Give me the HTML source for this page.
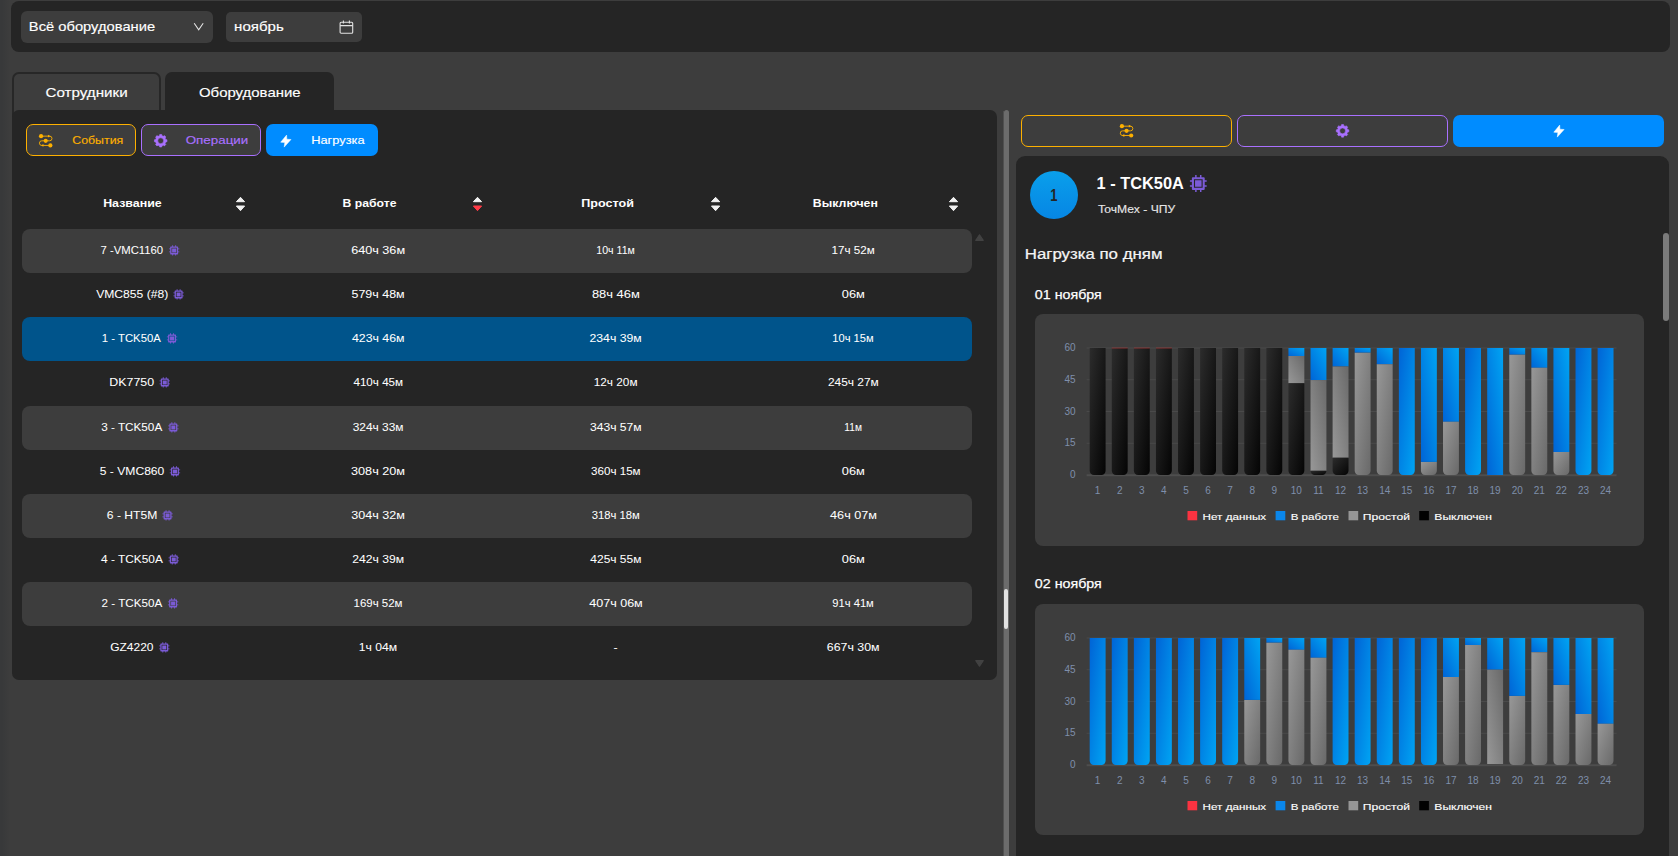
<!DOCTYPE html>
<html lang="ru"><head><meta charset="utf-8"><title>Нагрузка оборудования</title>
<style>
*{box-sizing:border-box;margin:0;padding:0}
html,body{width:1678px;height:856px;overflow:hidden;background:#3d3d3d;font-family:"Liberation Sans", sans-serif;color:#fff}
body{position:relative}
.ab{position:absolute}
.ic{position:absolute;display:block;overflow:visible}
.t{position:absolute;white-space:nowrap;line-height:1;transform-origin:0 50%;display:block}
.pan{position:absolute;background:#252525}
.btn{position:absolute;border-radius:7px;height:32px}
.row{position:absolute;left:22px;width:950px;border-radius:8px;background:#3d3d3d}
</style></head><body>
<div class="ab" style="left:0;top:0;width:10px;height:856px;background:linear-gradient(90deg,#38393a 20%,#3d3d3d)"></div>

<div class="pan" style="left:11px;top:1px;width:1659px;height:51px;border-radius:8px"></div>
<div class="ab" style="left:21px;top:11px;width:192px;height:32px;border-radius:6px;background:#3d3d3d"></div>
<span class="t" id="t0" style="left:28px;top:20px;font-size:13.5px;font-weight:400;color:#fff;-webkit-text-stroke:0.15px #fff;transform:translateX(0.83px) scaleX(1.0903)">Всё оборудование</span>
<svg class="ic" style="left:193px;top:22px" width="12" height="9" viewBox="0 0 12 9"><path d="M1.2 1.3L5.7 7.7L10.2 1.3" fill="none" stroke="#e4e4e4" stroke-width="1.1"/></svg>
<div class="ab" style="left:226px;top:12px;width:136px;height:30px;border-radius:5px;background:#3d3d3d"></div>
<span class="t" id="t1" style="left:234px;top:20px;font-size:13.5px;font-weight:400;color:#fff;-webkit-text-stroke:0.15px #fff;transform:translateX(0.11px) scaleX(1.1135)">ноябрь</span>
<svg class="ic" style="left:339px;top:20px" width="15" height="14" viewBox="0 0 15 14"><rect x="1.1" y="2.3" width="12.6" height="10.9" rx="1" fill="none" stroke="#e2e2e2" stroke-width="1.1"/><path d="M1.1 5.6H13.7M4.4 0.6V3.4M10.4 0.6V3.4" stroke="#e2e2e2" stroke-width="1.1" fill="none"/></svg>
<div class="ab" style="left:12px;top:72px;width:149px;height:46px;border-radius:7px 7px 0 0;border:2px solid #272727;background:#3d3d3d"></div>
<div class="pan" style="left:165px;top:72px;width:169px;height:46px;border-radius:7px 7px 0 0"></div>
<span class="t" id="t2" style="left:45px;top:86px;font-size:13.5px;font-weight:400;color:#fff;-webkit-text-stroke:0.15px #fff;transform:translateX(0.43px) scaleX(1.1252)">Сотрудники</span>
<span class="t" id="t3" style="left:198px;top:86px;font-size:13.5px;font-weight:400;color:#fff;-webkit-text-stroke:0.15px #fff;transform:translateX(0.94px) scaleX(1.1073)">Оборудование</span>
<div class="pan" style="left:12px;top:110px;width:985px;height:569.6px;border-radius:7px"></div>
<div class="btn" style="left:26px;top:124px;width:110.4px;border:1px solid #fdb000;background:#3d3d3d"></div>
<svg class="ic" style="left:38px;top:133px" width="16" height="16"><g transform="translate(0.45 0.55)"><path d="M2.6 2.6H11.2a2.325 2.325 0 0 1 0 4.65H3.3a2.325 2.325 0 0 0 0 4.65H11.9" fill="none" stroke="#fdb000" stroke-width="1" opacity="0.9"/><circle cx="2.6" cy="2.6" r="2.1" fill="#fdb000"/><circle cx="7.25" cy="7.25" r="2.1" fill="#fdb000"/><circle cx="11.9" cy="11.9" r="2.1" fill="#fdb000"/><path d="M9.5 1.2L11.9 2.6L9.5 4Z" fill="#fdb000"/><path d="M5 10.5L2.6 11.9L5 13.3Z" fill="#fdb000"/></g></svg>
<span class="t" id="t4" style="left:72px;top:135px;font-size:11.5px;font-weight:400;color:#fdb000;-webkit-text-stroke:0.15px #fdb000;transform:translateX(0.25px) scaleX(1.0737)">События</span>
<div class="btn" style="left:141px;top:124px;width:119.6px;border:1px solid #a970ff;background:#3d3d3d"></div>
<svg class="ic" style="left:153px;top:133px" width="15" height="15"><g transform="translate(0.70 0.75)"><path d="M5.76 2.00 L6.01 0.73 L7.99 0.73 L8.24 2.00 L9.66 2.59 L10.73 1.86 L12.14 3.27 L11.41 4.34 L12.00 5.76 L13.27 6.01 L13.27 7.99 L12.00 8.24 L11.41 9.66 L12.14 10.73 L10.73 12.14 L9.66 11.41 L8.24 12.00 L7.99 13.27 L6.01 13.27 L5.76 12.00 L4.34 11.41 L3.27 12.14 L1.86 10.73 L2.59 9.66 L2.00 8.24 L0.73 7.99 L0.73 6.01 L2.00 5.76 L2.59 4.34 L1.86 3.27 L3.27 1.86 L4.34 2.59Z M4.05 7.00 a2.95 2.95 0 1 0 5.90 0 a2.95 2.95 0 1 0 -5.90 0Z" fill="#a970ff" fill-rule="evenodd" stroke="#a970ff" stroke-width="0.6" stroke-linejoin="round"/></g></svg>
<span class="t" id="t5" style="left:185px;top:135px;font-size:11.5px;font-weight:400;color:#a970ff;-webkit-text-stroke:0.15px #a970ff;transform:translateX(0.71px) scaleX(1.1635)">Операции</span>
<div class="btn" style="left:266px;top:124px;width:111.6px;background:#008cff"></div>
<svg class="ic" style="left:280px;top:134px" width="12" height="14"><g transform="translate(0.40 0.70)"><path d="M6.2 0.4L0.3 7.5L4.4 7.7L3.8 12.4L10.6 4.8L6.4 4.5Z" fill="#fff" stroke="#fff" stroke-width="0.5" stroke-linejoin="round"/></g></svg>
<span class="t" id="t6" style="left:311px;top:135px;font-size:11.5px;font-weight:400;color:#fff;-webkit-text-stroke:0.15px #fff;transform:translateX(0.18px) scaleX(1.1148)">Нагрузка</span>
<span class="t" id="t7" style="left:103px;top:198px;font-size:11px;font-weight:700;color:#fff;transform:translateX(0.14px) scaleX(1.1281)">Название</span>
<svg class="ic" style="left:235px;top:196px" width="11" height="17"><g transform="translate(0.50 0.00)"><path d="M5 1.3L9.1 5.7H0.9Z" fill="#f0f0f0" stroke="#f0f0f0" stroke-width="1" stroke-linejoin="round"/><path d="M5 14.7L9.1 10H0.9Z" fill="#f0f0f0" stroke="#f0f0f0" stroke-width="1" stroke-linejoin="round"/></g></svg>
<span class="t" id="t8" style="left:342px;top:198px;font-size:11px;font-weight:700;color:#fff;transform:translateX(0.53px) scaleX(1.1111)">В работе</span>
<svg class="ic" style="left:472px;top:196px" width="11" height="17"><g transform="translate(0.50 0.00)"><path d="M5 1.3L9.1 5.7H0.9Z" fill="#f0f0f0" stroke="#f0f0f0" stroke-width="1" stroke-linejoin="round"/><path d="M5 14.7L9.1 10H0.9Z" fill="#ff3b47" stroke="#ff3b47" stroke-width="1" stroke-linejoin="round"/></g></svg>
<span class="t" id="t9" style="left:581px;top:198px;font-size:11px;font-weight:700;color:#fff;transform:translateX(0.31px) scaleX(1.1412)">Простой</span>
<svg class="ic" style="left:710px;top:196px" width="11" height="17"><g transform="translate(0.60 0.00)"><path d="M5 1.3L9.1 5.7H0.9Z" fill="#f0f0f0" stroke="#f0f0f0" stroke-width="1" stroke-linejoin="round"/><path d="M5 14.7L9.1 10H0.9Z" fill="#f0f0f0" stroke="#f0f0f0" stroke-width="1" stroke-linejoin="round"/></g></svg>
<span class="t" id="t10" style="left:812px;top:198px;font-size:11px;font-weight:700;color:#fff;transform:translateX(0.85px) scaleX(1.1196)">Выключен</span>
<svg class="ic" style="left:948px;top:196px" width="11" height="17"><g transform="translate(0.50 0.00)"><path d="M5 1.3L9.1 5.7H0.9Z" fill="#f0f0f0" stroke="#f0f0f0" stroke-width="1" stroke-linejoin="round"/><path d="M5 14.7L9.1 10H0.9Z" fill="#f0f0f0" stroke="#f0f0f0" stroke-width="1" stroke-linejoin="round"/></g></svg>
<div class="row" style="top:228.80px;height:43.90px"></div>
<div class="row" style="top:316.90px;height:44.10px;background:#00548b"></div>
<div class="row" style="top:405.70px;height:44.10px"></div>
<div class="row" style="top:493.90px;height:43.90px"></div>
<div class="row" style="top:581.90px;height:44.00px"></div>
<span class="t" id="t11" style="left:100px;top:245px;font-size:11.5px;font-weight:400;color:#fff;-webkit-text-stroke:0.04px #fff;transform:translateX(0.47px) scaleX(0.9835)">7 -VMC1160</span>
<svg class="ic" style="left:168px;top:245px" width="12" height="12"><g transform="translate(0.95 0.20)"><path transform="scale(0.6118)" d="M5.3 0h1.5v2.2h3.4V0h1.5v2.2H14a1 1 0 0 1 1 1V5.3h2v1.5h-2v3.4h2v1.5h-2V14a1 1 0 0 1-1 1h-2.3v2h-1.5v-2H6.8v2H5.3v-2H3a1 1 0 0 1-1-1v-2.3H0v-1.5h2V6.8H0V5.3h2V3.2a1 1 0 0 1 1-1h2.3ZM4.1 4.1v8.8h8.8V4.1ZM5.2 5.2h6.6v6.6H5.2Z" fill="#7b5bd6" fill-rule="evenodd"/></g></svg>
<span class="t" id="t12" style="left:351px;top:245px;font-size:11.5px;font-weight:400;color:#fff;-webkit-text-stroke:0.04px #fff;transform:translateX(0.21px) scaleX(1.0972)">640ч 36м</span>
<span class="t" id="t13" style="left:596px;top:245px;font-size:11.5px;font-weight:400;color:#fff;-webkit-text-stroke:0.04px #fff;transform:translateX(0.33px) scaleX(0.9209)">10ч 11м</span>
<span class="t" id="t14" style="left:831px;top:245px;font-size:11.5px;font-weight:400;color:#fff;-webkit-text-stroke:0.04px #fff;transform:translateX(0.43px) scaleX(1.0130)">17ч 52м</span>
<span class="t" id="t15" style="left:96px;top:289px;font-size:11.5px;font-weight:400;color:#fff;-webkit-text-stroke:0.04px #fff;transform:translateX(0.18px) scaleX(1.0542)">VMC855 (#8)</span>
<svg class="ic" style="left:173px;top:289px" width="12" height="12"><g transform="translate(0.40 0.20)"><path transform="scale(0.6118)" d="M5.3 0h1.5v2.2h3.4V0h1.5v2.2H14a1 1 0 0 1 1 1V5.3h2v1.5h-2v3.4h2v1.5h-2V14a1 1 0 0 1-1 1h-2.3v2h-1.5v-2H6.8v2H5.3v-2H3a1 1 0 0 1-1-1v-2.3H0v-1.5h2V6.8H0V5.3h2V3.2a1 1 0 0 1 1-1h2.3ZM4.1 4.1v8.8h8.8V4.1ZM5.2 5.2h6.6v6.6H5.2Z" fill="#7b5bd6" fill-rule="evenodd"/></g></svg>
<span class="t" id="t16" style="left:351px;top:289px;font-size:11.5px;font-weight:400;color:#fff;-webkit-text-stroke:0.04px #fff;transform:translateX(0.48px) scaleX(1.0834)">579ч 48м</span>
<span class="t" id="t17" style="left:591px;top:289px;font-size:11.5px;font-weight:400;color:#fff;-webkit-text-stroke:0.04px #fff;transform:translateX(0.95px) scaleX(1.1216)">88ч 46м</span>
<span class="t" id="t18" style="left:841px;top:289px;font-size:11.5px;font-weight:400;color:#fff;-webkit-text-stroke:0.04px #fff;transform:translateX(0.77px) scaleX(1.1117)">06м</span>
<span class="t" id="t19" style="left:101px;top:333px;font-size:11.5px;font-weight:400;color:#fff;-webkit-text-stroke:0.04px #fff;transform:translateX(0.84px) scaleX(0.9849)">1 - TCK50A</span>
<svg class="ic" style="left:166px;top:333px" width="12" height="12"><g transform="translate(0.85 0.20)"><path transform="scale(0.6118)" d="M5.3 0h1.5v2.2h3.4V0h1.5v2.2H14a1 1 0 0 1 1 1V5.3h2v1.5h-2v3.4h2v1.5h-2V14a1 1 0 0 1-1 1h-2.3v2h-1.5v-2H6.8v2H5.3v-2H3a1 1 0 0 1-1-1v-2.3H0v-1.5h2V6.8H0V5.3h2V3.2a1 1 0 0 1 1-1h2.3ZM4.1 4.1v8.8h8.8V4.1ZM5.2 5.2h6.6v6.6H5.2Z" fill="#7b5bd6" fill-rule="evenodd"/></g></svg>
<span class="t" id="t20" style="left:351px;top:333px;font-size:11.5px;font-weight:400;color:#fff;-webkit-text-stroke:0.04px #fff;transform:translateX(0.98px) scaleX(1.0699)">423ч 46м</span>
<span class="t" id="t21" style="left:589px;top:333px;font-size:11.5px;font-weight:400;color:#fff;-webkit-text-stroke:0.04px #fff;transform:translateX(0.48px) scaleX(1.0640)">234ч 39м</span>
<span class="t" id="t22" style="left:832px;top:333px;font-size:11.5px;font-weight:400;color:#fff;-webkit-text-stroke:0.04px #fff;transform:translateX(0.34px) scaleX(0.9675)">10ч 15м</span>
<span class="t" id="t23" style="left:109px;top:377px;font-size:11.5px;font-weight:400;color:#fff;-webkit-text-stroke:0.04px #fff;transform:translateX(0.34px) scaleX(1.0776)">DK7750</span>
<svg class="ic" style="left:159px;top:377px" width="12" height="12"><g transform="translate(0.55 0.20)"><path transform="scale(0.6118)" d="M5.3 0h1.5v2.2h3.4V0h1.5v2.2H14a1 1 0 0 1 1 1V5.3h2v1.5h-2v3.4h2v1.5h-2V14a1 1 0 0 1-1 1h-2.3v2h-1.5v-2H6.8v2H5.3v-2H3a1 1 0 0 1-1-1v-2.3H0v-1.5h2V6.8H0V5.3h2V3.2a1 1 0 0 1 1-1h2.3ZM4.1 4.1v8.8h8.8V4.1ZM5.2 5.2h6.6v6.6H5.2Z" fill="#7b5bd6" fill-rule="evenodd"/></g></svg>
<span class="t" id="t24" style="left:353px;top:377px;font-size:11.5px;font-weight:400;color:#fff;-webkit-text-stroke:0.04px #fff;transform:translateX(0.42px) scaleX(1.0122)">410ч 45м</span>
<span class="t" id="t25" style="left:593px;top:377px;font-size:11.5px;font-weight:400;color:#fff;-webkit-text-stroke:0.04px #fff;transform:translateX(0.72px) scaleX(1.0255)">12ч 20м</span>
<span class="t" id="t26" style="left:827px;top:377px;font-size:11.5px;font-weight:400;color:#fff;-webkit-text-stroke:0.04px #fff;transform:translateX(0.92px) scaleX(1.0373)">245ч 27м</span>
<span class="t" id="t27" style="left:101px;top:422px;font-size:11.5px;font-weight:400;color:#fff;-webkit-text-stroke:0.04px #fff;transform:translateX(0.15px) scaleX(1.0197)">3 - TCK50A</span>
<svg class="ic" style="left:168px;top:422px" width="12" height="12"><g transform="translate(0.15 0.20)"><path transform="scale(0.6118)" d="M5.3 0h1.5v2.2h3.4V0h1.5v2.2H14a1 1 0 0 1 1 1V5.3h2v1.5h-2v3.4h2v1.5h-2V14a1 1 0 0 1-1 1h-2.3v2h-1.5v-2H6.8v2H5.3v-2H3a1 1 0 0 1-1-1v-2.3H0v-1.5h2V6.8H0V5.3h2V3.2a1 1 0 0 1 1-1h2.3ZM4.1 4.1v8.8h8.8V4.1ZM5.2 5.2h6.6v6.6H5.2Z" fill="#7b5bd6" fill-rule="evenodd"/></g></svg>
<span class="t" id="t28" style="left:352px;top:422px;font-size:11.5px;font-weight:400;color:#fff;-webkit-text-stroke:0.04px #fff;transform:translateX(0.69px) scaleX(1.0364)">324ч 33м</span>
<span class="t" id="t29" style="left:589px;top:422px;font-size:11.5px;font-weight:400;color:#fff;-webkit-text-stroke:0.04px #fff;transform:translateX(0.93px) scaleX(1.0548)">343ч 57м</span>
<span class="t" id="t30" style="left:844px;top:422px;font-size:11.5px;font-weight:400;color:#fff;-webkit-text-stroke:0.04px #fff;transform:translateX(0.34px) scaleX(0.8843)">11м</span>
<span class="t" id="t31" style="left:99px;top:466px;font-size:11.5px;font-weight:400;color:#fff;-webkit-text-stroke:0.04px #fff;transform:translateX(0.74px) scaleX(1.0528)">5 - VMC860</span>
<svg class="ic" style="left:169px;top:466px" width="12" height="12"><g transform="translate(0.75 0.20)"><path transform="scale(0.6118)" d="M5.3 0h1.5v2.2h3.4V0h1.5v2.2H14a1 1 0 0 1 1 1V5.3h2v1.5h-2v3.4h2v1.5h-2V14a1 1 0 0 1-1 1h-2.3v2h-1.5v-2H6.8v2H5.3v-2H3a1 1 0 0 1-1-1v-2.3H0v-1.5h2V6.8H0V5.3h2V3.2a1 1 0 0 1 1-1h2.3ZM4.1 4.1v8.8h8.8V4.1ZM5.2 5.2h6.6v6.6H5.2Z" fill="#7b5bd6" fill-rule="evenodd"/></g></svg>
<span class="t" id="t32" style="left:351px;top:466px;font-size:11.5px;font-weight:400;color:#fff;-webkit-text-stroke:0.04px #fff;transform:translateX(0.03px) scaleX(1.1003)">308ч 20м</span>
<span class="t" id="t33" style="left:591px;top:466px;font-size:11.5px;font-weight:400;color:#fff;-webkit-text-stroke:0.04px #fff;transform:translateX(0.01px) scaleX(1.0103)">360ч 15м</span>
<span class="t" id="t34" style="left:841px;top:466px;font-size:11.5px;font-weight:400;color:#fff;-webkit-text-stroke:0.04px #fff;transform:translateX(0.77px) scaleX(1.1117)">06м</span>
<span class="t" id="t35" style="left:106px;top:510px;font-size:11.5px;font-weight:400;color:#fff;-webkit-text-stroke:0.04px #fff;transform:translateX(0.81px) scaleX(1.0538)">6 - HT5M</span>
<svg class="ic" style="left:162px;top:510px" width="12" height="12"><g transform="translate(0.35 0.20)"><path transform="scale(0.6118)" d="M5.3 0h1.5v2.2h3.4V0h1.5v2.2H14a1 1 0 0 1 1 1V5.3h2v1.5h-2v3.4h2v1.5h-2V14a1 1 0 0 1-1 1h-2.3v2h-1.5v-2H6.8v2H5.3v-2H3a1 1 0 0 1-1-1v-2.3H0v-1.5h2V6.8H0V5.3h2V3.2a1 1 0 0 1 1-1h2.3ZM4.1 4.1v8.8h8.8V4.1ZM5.2 5.2h6.6v6.6H5.2Z" fill="#7b5bd6" fill-rule="evenodd"/></g></svg>
<span class="t" id="t36" style="left:351px;top:510px;font-size:11.5px;font-weight:400;color:#fff;-webkit-text-stroke:0.04px #fff;transform:translateX(0.31px) scaleX(1.0912)">304ч 32м</span>
<span class="t" id="t37" style="left:591px;top:510px;font-size:11.5px;font-weight:400;color:#fff;-webkit-text-stroke:0.04px #fff;transform:translateX(0.63px) scaleX(0.9808)">318ч 18м</span>
<span class="t" id="t38" style="left:830px;top:510px;font-size:11.5px;font-weight:400;color:#fff;-webkit-text-stroke:0.04px #fff;transform:translateX(0.09px) scaleX(1.0983)">46ч 07м</span>
<span class="t" id="t39" style="left:101px;top:554px;font-size:11.5px;font-weight:400;color:#fff;-webkit-text-stroke:0.04px #fff;transform:translateX(0.12px) scaleX(1.0306)">4 - TCK50A</span>
<svg class="ic" style="left:168px;top:554px" width="12" height="12"><g transform="translate(0.55 0.20)"><path transform="scale(0.6118)" d="M5.3 0h1.5v2.2h3.4V0h1.5v2.2H14a1 1 0 0 1 1 1V5.3h2v1.5h-2v3.4h2v1.5h-2V14a1 1 0 0 1-1 1h-2.3v2h-1.5v-2H6.8v2H5.3v-2H3a1 1 0 0 1-1-1v-2.3H0v-1.5h2V6.8H0V5.3h2V3.2a1 1 0 0 1 1-1h2.3ZM4.1 4.1v8.8h8.8V4.1ZM5.2 5.2h6.6v6.6H5.2Z" fill="#7b5bd6" fill-rule="evenodd"/></g></svg>
<span class="t" id="t40" style="left:352px;top:554px;font-size:11.5px;font-weight:400;color:#fff;-webkit-text-stroke:0.04px #fff;transform:translateX(0.20px) scaleX(1.0552)">242ч 39м</span>
<span class="t" id="t41" style="left:590px;top:554px;font-size:11.5px;font-weight:400;color:#fff;-webkit-text-stroke:0.04px #fff;transform:translateX(0.37px) scaleX(1.0396)">425ч 55м</span>
<span class="t" id="t42" style="left:841px;top:554px;font-size:11.5px;font-weight:400;color:#fff;-webkit-text-stroke:0.04px #fff;transform:translateX(0.77px) scaleX(1.1117)">06м</span>
<span class="t" id="t43" style="left:101px;top:598px;font-size:11.5px;font-weight:400;color:#fff;-webkit-text-stroke:0.04px #fff;transform:translateX(0.57px) scaleX(1.0143)">2 - TCK50A</span>
<svg class="ic" style="left:167px;top:598px" width="12" height="12"><g transform="translate(0.90 0.20)"><path transform="scale(0.6118)" d="M5.3 0h1.5v2.2h3.4V0h1.5v2.2H14a1 1 0 0 1 1 1V5.3h2v1.5h-2v3.4h2v1.5h-2V14a1 1 0 0 1-1 1h-2.3v2h-1.5v-2H6.8v2H5.3v-2H3a1 1 0 0 1-1-1v-2.3H0v-1.5h2V6.8H0V5.3h2V3.2a1 1 0 0 1 1-1h2.3ZM4.1 4.1v8.8h8.8V4.1ZM5.2 5.2h6.6v6.6H5.2Z" fill="#7b5bd6" fill-rule="evenodd"/></g></svg>
<span class="t" id="t44" style="left:353px;top:598px;font-size:11.5px;font-weight:400;color:#fff;-webkit-text-stroke:0.04px #fff;transform:translateX(0.49px) scaleX(0.9992)">169ч 52м</span>
<span class="t" id="t45" style="left:589px;top:598px;font-size:11.5px;font-weight:400;color:#fff;-webkit-text-stroke:0.04px #fff;transform:translateX(0.19px) scaleX(1.0913)">407ч 06м</span>
<span class="t" id="t46" style="left:832px;top:598px;font-size:11.5px;font-weight:400;color:#fff;-webkit-text-stroke:0.04px #fff;transform:translateX(0.34px) scaleX(0.9715)">91ч 41м</span>
<span class="t" id="t47" style="left:110px;top:642px;font-size:11.5px;font-weight:400;color:#fff;-webkit-text-stroke:0.04px #fff;transform:translateX(0.20px) scaleX(1.0425)">GZ4220</span>
<svg class="ic" style="left:159px;top:642px" width="12" height="12"><g transform="translate(0.10 0.20)"><path transform="scale(0.6118)" d="M5.3 0h1.5v2.2h3.4V0h1.5v2.2H14a1 1 0 0 1 1 1V5.3h2v1.5h-2v3.4h2v1.5h-2V14a1 1 0 0 1-1 1h-2.3v2h-1.5v-2H6.8v2H5.3v-2H3a1 1 0 0 1-1-1v-2.3H0v-1.5h2V6.8H0V5.3h2V3.2a1 1 0 0 1 1-1h2.3ZM4.1 4.1v8.8h8.8V4.1ZM5.2 5.2h6.6v6.6H5.2Z" fill="#7b5bd6" fill-rule="evenodd"/></g></svg>
<span class="t" id="t48" style="left:358px;top:642px;font-size:11.5px;font-weight:400;color:#fff;-webkit-text-stroke:0.04px #fff;transform:translateX(0.66px) scaleX(1.0578)">1ч 04м</span>
<span class="t" id="t49" style="left:613px;top:642px;font-size:11.5px;font-weight:400;color:#fff;-webkit-text-stroke:0.04px #fff;transform:translateX(0.49px) scaleX(1.0758)">-</span>
<span class="t" id="t50" style="left:826px;top:642px;font-size:11.5px;font-weight:400;color:#fff;-webkit-text-stroke:0.04px #fff;transform:translateX(0.76px) scaleX(1.0747)">667ч 30м</span>
<svg class="ic" style="left:975px;top:234px" width="9" height="7" viewBox="0 0 9 7"><path d="M4.5 0.8L8.2 6.4H0.8Z" fill="#424242" stroke="#424242" stroke-width="1.2" stroke-linejoin="round"/></svg>
<svg class="ic" style="left:975px;top:660px" width="9" height="7" viewBox="0 0 9 7"><path d="M4.5 6.2L8.2 0.6H0.8Z" fill="#424242" stroke="#424242" stroke-width="1.2" stroke-linejoin="round"/></svg>
<div class="ab" style="left:1003px;top:111px;width:1px;height:745px;background:#505050"></div>
<div class="ab" style="left:1004px;top:109.5px;width:5px;height:746.5px;border-radius:3px 3px 0 0;background:#6c6c6c"></div>
<div class="ab" style="left:1003.7px;top:589.3px;width:4.8px;height:40px;border-radius:3px;background:#e2e2e2"></div>
<div class="btn" style="left:1021px;top:115px;width:210.6px;border:1px solid #fdb000;background:#3d3d3d"></div>
<svg class="ic" style="left:1119px;top:123px" width="16" height="16"><g transform="translate(0.30 0.60)"><path d="M2.6 2.6H11.2a2.325 2.325 0 0 1 0 4.65H3.3a2.325 2.325 0 0 0 0 4.65H11.9" fill="none" stroke="#fdb000" stroke-width="1" opacity="0.9"/><circle cx="2.6" cy="2.6" r="2.1" fill="#fdb000"/><circle cx="7.25" cy="7.25" r="2.1" fill="#fdb000"/><circle cx="11.9" cy="11.9" r="2.1" fill="#fdb000"/><path d="M9.5 1.2L11.9 2.6L9.5 4Z" fill="#fdb000"/><path d="M5 10.5L2.6 11.9L5 13.3Z" fill="#fdb000"/></g></svg>
<div class="btn" style="left:1237px;top:115px;width:210.7px;border:1px solid #a970ff;background:#3d3d3d"></div>
<svg class="ic" style="left:1335px;top:123px" width="15" height="15"><g transform="translate(0.56 0.86)"><path d="M5.76 2.00 L6.01 0.73 L7.99 0.73 L8.24 2.00 L9.66 2.59 L10.73 1.86 L12.14 3.27 L11.41 4.34 L12.00 5.76 L13.27 6.01 L13.27 7.99 L12.00 8.24 L11.41 9.66 L12.14 10.73 L10.73 12.14 L9.66 11.41 L8.24 12.00 L7.99 13.27 L6.01 13.27 L5.76 12.00 L4.34 11.41 L3.27 12.14 L1.86 10.73 L2.59 9.66 L2.00 8.24 L0.73 7.99 L0.73 6.01 L2.00 5.76 L2.59 4.34 L1.86 3.27 L3.27 1.86 L4.34 2.59Z M4.05 7.00 a2.95 2.95 0 1 0 5.90 0 a2.95 2.95 0 1 0 -5.90 0Z" fill="#a970ff" fill-rule="evenodd" stroke="#a970ff" stroke-width="0.6" stroke-linejoin="round"/></g></svg>
<div class="btn" style="left:1453px;top:115px;width:211px;background:#008cff"></div>
<svg class="ic" style="left:1553px;top:124px" width="12" height="14"><g transform="translate(0.50 0.70)"><path d="M6.2 0.4L0.3 7.5L4.4 7.7L3.8 12.4L10.6 4.8L6.4 4.5Z" fill="#fff" stroke="#fff" stroke-width="0.5" stroke-linejoin="round"/></g></svg>
<div class="pan" style="left:1016px;top:155.7px;width:652.8px;height:700.3px;border-radius:9px 9px 0 0"></div>
<div class="ab" style="left:1663.2px;top:233.3px;width:5.4px;height:87.6px;border-radius:3px;background:#7b7b7b"></div>
<div class="ab" style="left:1030px;top:171px;width:48.2px;height:48.2px;border-radius:50%;background:linear-gradient(180deg,#0a9feb,#0686e4)"></div>
<span class="t" id="t51" style="left:1050px;top:187px;font-size:17px;font-weight:700;color:#252525;transform:translateX(0.20px) scaleX(0.7636)">1</span>
<span class="t" id="t52" style="left:1096px;top:176px;font-size:16px;font-weight:700;color:#fff;transform:translateX(0.58px) scaleX(1.0229)">1 - TCK50A</span>
<svg class="ic" style="left:1189px;top:175px" width="18" height="18"><g transform="translate(0.90 0.10)"><path transform="scale(0.9882)" d="M5.3 0h1.5v2.2h3.4V0h1.5v2.2H14a1 1 0 0 1 1 1V5.3h2v1.5h-2v3.4h2v1.5h-2V14a1 1 0 0 1-1 1h-2.3v2h-1.5v-2H6.8v2H5.3v-2H3a1 1 0 0 1-1-1v-2.3H0v-1.5h2V6.8H0V5.3h2V3.2a1 1 0 0 1 1-1h2.3ZM4.1 4.1v8.8h8.8V4.1ZM5.2 5.2h6.6v6.6H5.2Z" fill="#7b5bd6" fill-rule="evenodd"/></g></svg>
<span class="t" id="t53" style="left:1097px;top:204px;font-size:11.5px;font-weight:400;color:#e6e6e6;-webkit-text-stroke:0.15px #e6e6e6;transform:translateX(0.88px) scaleX(1.0532)">ТочМех - ЧПУ</span>
<span class="t" id="t54" style="left:1024px;top:247px;font-size:14px;font-weight:400;color:#f4f4f4;-webkit-text-stroke:0.22px #f4f4f4;transform:translateX(0.78px) scaleX(1.2021)">Нагрузка по дням</span>
<div class="ab" style="left:1035px;top:314px;width:609px;height:232px;border-radius:8px;background:#3d3d3d"></div>
<span class="t" id="t55" style="left:1034px;top:288px;font-size:13.5px;font-weight:400;color:#fff;-webkit-text-stroke:0.25px #fff;transform:translateX(0.87px) scaleX(1.0551)">01 ноября</span>
<svg class="ic" style="left:1035px;top:314px" width="609" height="232" viewBox="1035 314 609 232" font-family='"Liberation Sans", sans-serif'>
<defs><linearGradient id="ab1" x1="0" y1="0" x2="1" y2="1"><stop offset="0" stop-color="#0064d6"/><stop offset="1" stop-color="#00a4f3"/></linearGradient><linearGradient id="ab2" x1="1" y1="0" x2="0" y2="1"><stop offset="0" stop-color="#00a4f3"/><stop offset="1" stop-color="#0064d6"/></linearGradient><linearGradient id="ag1" x1="0" y1="0" x2="1" y2="1"><stop offset="0" stop-color="#989898"/><stop offset="1" stop-color="#696969"/></linearGradient><linearGradient id="ag2" x1="1" y1="0" x2="0" y2="1"><stop offset="0" stop-color="#696969"/><stop offset="1" stop-color="#989898"/></linearGradient><linearGradient id="ak1" x1="0" y1="0" x2="1" y2="1"><stop offset="0" stop-color="#2c2c2c"/><stop offset="1" stop-color="#040404"/></linearGradient><linearGradient id="ak2" x1="1" y1="0" x2="0" y2="1"><stop offset="0" stop-color="#040404"/><stop offset="1" stop-color="#2c2c2c"/></linearGradient></defs>
<path d="M1086.6 348.00H1616.6" stroke="#4a4a4a" stroke-width="1"/>
<text x="1075.5" y="351.20" text-anchor="end" font-size="10" fill="#7f8fab">60</text>
<path d="M1086.6 379.75H1616.6" stroke="#4a4a4a" stroke-width="1"/>
<text x="1075.5" y="382.95" text-anchor="end" font-size="10" fill="#7f8fab">45</text>
<path d="M1086.6 411.50H1616.6" stroke="#4a4a4a" stroke-width="1"/>
<text x="1075.5" y="414.70" text-anchor="end" font-size="10" fill="#7f8fab">30</text>
<path d="M1086.6 443.25H1616.6" stroke="#4a4a4a" stroke-width="1"/>
<text x="1075.5" y="446.45" text-anchor="end" font-size="10" fill="#7f8fab">15</text>
<path d="M1086.6 475.30H1616.6" stroke="#4e4e4e" stroke-width="1.9"/>
<text x="1075.5" y="478.20" text-anchor="end" font-size="10" fill="#7f8fab">0</text>
<path d="M1089.69 348.00h15.9V470.80a4.2 4.2 0 0 1 -4.2 4.2H1093.89a4.2 4.2 0 0 1 -4.2 -4.2Z" fill="url(#ak1)"/>
<text x="1097.64" y="494.10" text-anchor="middle" font-size="10" fill="#7f8fab">1</text>
<path d="M1111.77 348.00h15.9V470.80a4.2 4.2 0 0 1 -4.2 4.2H1115.97a4.2 4.2 0 0 1 -4.2 -4.2Z" fill="url(#ak1)"/>
<rect x="1111.77" y="347.70" width="15.9" height="0.7" fill="#c83a3a" opacity="0.8"/>
<text x="1119.72" y="494.10" text-anchor="middle" font-size="10" fill="#7f8fab">2</text>
<path d="M1133.86 348.00h15.9V470.80a4.2 4.2 0 0 1 -4.2 4.2H1138.06a4.2 4.2 0 0 1 -4.2 -4.2Z" fill="url(#ak1)"/>
<rect x="1133.86" y="347.70" width="15.9" height="0.7" fill="#c83a3a" opacity="0.8"/>
<text x="1141.81" y="494.10" text-anchor="middle" font-size="10" fill="#7f8fab">3</text>
<path d="M1155.94 348.00h15.9V470.80a4.2 4.2 0 0 1 -4.2 4.2H1160.14a4.2 4.2 0 0 1 -4.2 -4.2Z" fill="url(#ak1)"/>
<rect x="1155.94" y="347.70" width="15.9" height="0.7" fill="#c83a3a" opacity="0.8"/>
<text x="1163.89" y="494.10" text-anchor="middle" font-size="10" fill="#7f8fab">4</text>
<path d="M1178.02 348.00h15.9V470.80a4.2 4.2 0 0 1 -4.2 4.2H1182.22a4.2 4.2 0 0 1 -4.2 -4.2Z" fill="url(#ak1)"/>
<text x="1185.97" y="494.10" text-anchor="middle" font-size="10" fill="#7f8fab">5</text>
<path d="M1200.11 348.00h15.9V470.80a4.2 4.2 0 0 1 -4.2 4.2H1204.31a4.2 4.2 0 0 1 -4.2 -4.2Z" fill="url(#ak1)"/>
<text x="1208.06" y="494.10" text-anchor="middle" font-size="10" fill="#7f8fab">6</text>
<path d="M1222.19 348.00h15.9V470.80a4.2 4.2 0 0 1 -4.2 4.2H1226.39a4.2 4.2 0 0 1 -4.2 -4.2Z" fill="url(#ak1)"/>
<text x="1230.14" y="494.10" text-anchor="middle" font-size="10" fill="#7f8fab">7</text>
<path d="M1244.27 348.00h15.9V470.80a4.2 4.2 0 0 1 -4.2 4.2H1248.47a4.2 4.2 0 0 1 -4.2 -4.2Z" fill="url(#ak1)"/>
<text x="1252.22" y="494.10" text-anchor="middle" font-size="10" fill="#7f8fab">8</text>
<path d="M1266.36 348.00h15.9V470.80a4.2 4.2 0 0 1 -4.2 4.2H1270.56a4.2 4.2 0 0 1 -4.2 -4.2Z" fill="url(#ak1)"/>
<text x="1274.31" y="494.10" text-anchor="middle" font-size="10" fill="#7f8fab">9</text>
<rect x="1288.44" y="348.00" width="15.9" height="8.00" fill="url(#ab2)"/>
<rect x="1288.44" y="356.00" width="15.9" height="27.20" fill="url(#ag2)"/>
<path d="M1288.44 383.20h15.9V470.80a4.2 4.2 0 0 1 -4.2 4.2H1292.64a4.2 4.2 0 0 1 -4.2 -4.2Z" fill="url(#ak1)"/>
<text x="1296.39" y="494.10" text-anchor="middle" font-size="10" fill="#7f8fab">10</text>
<rect x="1310.52" y="348.00" width="15.9" height="32.10" fill="url(#ab2)"/>
<rect x="1310.52" y="380.10" width="15.9" height="90.70" fill="url(#ag2)"/>
<path d="M1310.52 470.80h15.9V470.80a4.199999999999989 4.199999999999989 0 0 1 -4.199999999999989 4.199999999999989H1314.72a4.199999999999989 4.199999999999989 0 0 1 -4.199999999999989 -4.199999999999989Z" fill="url(#ak1)"/>
<text x="1318.47" y="494.10" text-anchor="middle" font-size="10" fill="#7f8fab">11</text>
<rect x="1332.61" y="348.00" width="15.9" height="18.50" fill="url(#ab2)"/>
<rect x="1332.61" y="366.50" width="15.9" height="91.20" fill="url(#ag2)"/>
<path d="M1332.61 457.70h15.9V470.80a4.2 4.2 0 0 1 -4.2 4.2H1336.81a4.2 4.2 0 0 1 -4.2 -4.2Z" fill="url(#ak1)"/>
<text x="1340.56" y="494.10" text-anchor="middle" font-size="10" fill="#7f8fab">12</text>
<rect x="1354.69" y="348.00" width="15.9" height="4.70" fill="url(#ab2)"/>
<path d="M1354.69 352.70h15.9V470.80a4.2 4.2 0 0 1 -4.2 4.2H1358.89a4.2 4.2 0 0 1 -4.2 -4.2Z" fill="url(#ag1)"/>
<text x="1362.64" y="494.10" text-anchor="middle" font-size="10" fill="#7f8fab">13</text>
<rect x="1376.77" y="348.00" width="15.9" height="16.30" fill="url(#ab2)"/>
<path d="M1376.77 364.30h15.9V470.80a4.2 4.2 0 0 1 -4.2 4.2H1380.97a4.2 4.2 0 0 1 -4.2 -4.2Z" fill="url(#ag1)"/>
<text x="1384.72" y="494.10" text-anchor="middle" font-size="10" fill="#7f8fab">14</text>
<path d="M1398.86 348.00h15.9V470.80a4.2 4.2 0 0 1 -4.2 4.2H1403.06a4.2 4.2 0 0 1 -4.2 -4.2Z" fill="url(#ab1)"/>
<text x="1406.81" y="494.10" text-anchor="middle" font-size="10" fill="#7f8fab">15</text>
<rect x="1420.94" y="348.00" width="15.9" height="113.90" fill="url(#ab2)"/>
<path d="M1420.94 461.90h15.9V470.80a4.2 4.2 0 0 1 -4.2 4.2H1425.14a4.2 4.2 0 0 1 -4.2 -4.2Z" fill="url(#ag1)"/>
<text x="1428.89" y="494.10" text-anchor="middle" font-size="10" fill="#7f8fab">16</text>
<rect x="1443.02" y="348.00" width="15.9" height="73.80" fill="url(#ab2)"/>
<path d="M1443.02 421.80h15.9V470.80a4.2 4.2 0 0 1 -4.2 4.2H1447.22a4.2 4.2 0 0 1 -4.2 -4.2Z" fill="url(#ag1)"/>
<text x="1450.97" y="494.10" text-anchor="middle" font-size="10" fill="#7f8fab">17</text>
<path d="M1465.11 348.00h15.9V470.80a4.2 4.2 0 0 1 -4.2 4.2H1469.31a4.2 4.2 0 0 1 -4.2 -4.2Z" fill="url(#ab1)"/>
<text x="1473.06" y="494.10" text-anchor="middle" font-size="10" fill="#7f8fab">18</text>
<rect x="1487.19" y="348.00" width="15.9" height="127.00" fill="url(#ab2)"/>
<text x="1495.14" y="494.10" text-anchor="middle" font-size="10" fill="#7f8fab">19</text>
<rect x="1509.27" y="348.00" width="15.9" height="6.70" fill="url(#ab2)"/>
<path d="M1509.27 354.70h15.9V470.80a4.2 4.2 0 0 1 -4.2 4.2H1513.47a4.2 4.2 0 0 1 -4.2 -4.2Z" fill="url(#ag1)"/>
<text x="1517.22" y="494.10" text-anchor="middle" font-size="10" fill="#7f8fab">20</text>
<rect x="1531.36" y="348.00" width="15.9" height="19.80" fill="url(#ab2)"/>
<path d="M1531.36 367.80h15.9V470.80a4.2 4.2 0 0 1 -4.2 4.2H1535.56a4.2 4.2 0 0 1 -4.2 -4.2Z" fill="url(#ag1)"/>
<text x="1539.31" y="494.10" text-anchor="middle" font-size="10" fill="#7f8fab">21</text>
<rect x="1553.44" y="348.00" width="15.9" height="104.00" fill="url(#ab2)"/>
<path d="M1553.44 452.00h15.9V470.80a4.2 4.2 0 0 1 -4.2 4.2H1557.64a4.2 4.2 0 0 1 -4.2 -4.2Z" fill="url(#ag1)"/>
<text x="1561.39" y="494.10" text-anchor="middle" font-size="10" fill="#7f8fab">22</text>
<path d="M1575.52 348.00h15.9V470.80a4.2 4.2 0 0 1 -4.2 4.2H1579.72a4.2 4.2 0 0 1 -4.2 -4.2Z" fill="url(#ab1)"/>
<text x="1583.47" y="494.10" text-anchor="middle" font-size="10" fill="#7f8fab">23</text>
<path d="M1597.61 348.00h15.9V470.80a4.2 4.2 0 0 1 -4.2 4.2H1601.81a4.2 4.2 0 0 1 -4.2 -4.2Z" fill="url(#ab1)"/>
<text x="1605.56" y="494.10" text-anchor="middle" font-size="10" fill="#7f8fab">24</text>
<rect x="1187.5" y="511" width="9.7" height="9.3" fill="#fa3341"/>
<rect x="1275.6" y="511" width="9.7" height="9.3" fill="#0a86ea"/>
<rect x="1348.5" y="511" width="9.7" height="9.3" fill="#969696"/>
<rect x="1419.2" y="511" width="9.7" height="9.3" fill="#020202"/>
</svg>
<span class="t" id="t56" style="left:1202px;top:512px;font-size:9.5px;font-weight:400;color:#fff;-webkit-text-stroke:0.12px #fff;transform:translateX(0.55px) scaleX(1.2298)">Нет данных</span>
<span class="t" id="t57" style="left:1290px;top:512px;font-size:9.5px;font-weight:400;color:#fff;-webkit-text-stroke:0.12px #fff;transform:translateX(0.67px) scaleX(1.2185)">В работе</span>
<span class="t" id="t58" style="left:1362px;top:512px;font-size:9.5px;font-weight:400;color:#fff;-webkit-text-stroke:0.12px #fff;transform:translateX(0.69px) scaleX(1.2786)">Простой</span>
<span class="t" id="t59" style="left:1434px;top:512px;font-size:9.5px;font-weight:400;color:#fff;-webkit-text-stroke:0.12px #fff;transform:translateX(0.35px) scaleX(1.2702)">Выключен</span>
<div class="ab" style="left:1035px;top:604px;width:609px;height:231px;border-radius:8px;background:#3d3d3d"></div>
<span class="t" id="t60" style="left:1034px;top:577px;font-size:13.5px;font-weight:400;color:#fff;-webkit-text-stroke:0.25px #fff;transform:translateX(0.87px) scaleX(1.0551)">02 ноября</span>
<svg class="ic" style="left:1035px;top:604px" width="609" height="232" viewBox="1035 604 609 232" font-family='"Liberation Sans", sans-serif'>
<defs><linearGradient id="cb1" x1="0" y1="0" x2="1" y2="1"><stop offset="0" stop-color="#0064d6"/><stop offset="1" stop-color="#00a4f3"/></linearGradient><linearGradient id="cb2" x1="1" y1="0" x2="0" y2="1"><stop offset="0" stop-color="#00a4f3"/><stop offset="1" stop-color="#0064d6"/></linearGradient><linearGradient id="cg1" x1="0" y1="0" x2="1" y2="1"><stop offset="0" stop-color="#989898"/><stop offset="1" stop-color="#696969"/></linearGradient><linearGradient id="cg2" x1="1" y1="0" x2="0" y2="1"><stop offset="0" stop-color="#696969"/><stop offset="1" stop-color="#989898"/></linearGradient><linearGradient id="ck1" x1="0" y1="0" x2="1" y2="1"><stop offset="0" stop-color="#2c2c2c"/><stop offset="1" stop-color="#040404"/></linearGradient><linearGradient id="ck2" x1="1" y1="0" x2="0" y2="1"><stop offset="0" stop-color="#040404"/><stop offset="1" stop-color="#2c2c2c"/></linearGradient></defs>
<path d="M1086.6 638.00H1616.6" stroke="#4a4a4a" stroke-width="1"/>
<text x="1075.5" y="641.20" text-anchor="end" font-size="10" fill="#7f8fab">60</text>
<path d="M1086.6 669.75H1616.6" stroke="#4a4a4a" stroke-width="1"/>
<text x="1075.5" y="672.95" text-anchor="end" font-size="10" fill="#7f8fab">45</text>
<path d="M1086.6 701.50H1616.6" stroke="#4a4a4a" stroke-width="1"/>
<text x="1075.5" y="704.70" text-anchor="end" font-size="10" fill="#7f8fab">30</text>
<path d="M1086.6 733.25H1616.6" stroke="#4a4a4a" stroke-width="1"/>
<text x="1075.5" y="736.45" text-anchor="end" font-size="10" fill="#7f8fab">15</text>
<path d="M1086.6 765.30H1616.6" stroke="#4e4e4e" stroke-width="1.9"/>
<text x="1075.5" y="768.20" text-anchor="end" font-size="10" fill="#7f8fab">0</text>
<path d="M1089.69 638.00h15.9V760.80a4.2 4.2 0 0 1 -4.2 4.2H1093.89a4.2 4.2 0 0 1 -4.2 -4.2Z" fill="url(#cb1)"/>
<text x="1097.64" y="784.10" text-anchor="middle" font-size="10" fill="#7f8fab">1</text>
<path d="M1111.77 638.00h15.9V760.80a4.2 4.2 0 0 1 -4.2 4.2H1115.97a4.2 4.2 0 0 1 -4.2 -4.2Z" fill="url(#cb1)"/>
<text x="1119.72" y="784.10" text-anchor="middle" font-size="10" fill="#7f8fab">2</text>
<path d="M1133.86 638.00h15.9V760.80a4.2 4.2 0 0 1 -4.2 4.2H1138.06a4.2 4.2 0 0 1 -4.2 -4.2Z" fill="url(#cb1)"/>
<text x="1141.81" y="784.10" text-anchor="middle" font-size="10" fill="#7f8fab">3</text>
<path d="M1155.94 638.00h15.9V760.80a4.2 4.2 0 0 1 -4.2 4.2H1160.14a4.2 4.2 0 0 1 -4.2 -4.2Z" fill="url(#cb1)"/>
<text x="1163.89" y="784.10" text-anchor="middle" font-size="10" fill="#7f8fab">4</text>
<path d="M1178.02 638.00h15.9V760.80a4.2 4.2 0 0 1 -4.2 4.2H1182.22a4.2 4.2 0 0 1 -4.2 -4.2Z" fill="url(#cb1)"/>
<text x="1185.97" y="784.10" text-anchor="middle" font-size="10" fill="#7f8fab">5</text>
<path d="M1200.11 638.00h15.9V760.80a4.2 4.2 0 0 1 -4.2 4.2H1204.31a4.2 4.2 0 0 1 -4.2 -4.2Z" fill="url(#cb1)"/>
<text x="1208.06" y="784.10" text-anchor="middle" font-size="10" fill="#7f8fab">6</text>
<path d="M1222.19 638.00h15.9V760.80a4.2 4.2 0 0 1 -4.2 4.2H1226.39a4.2 4.2 0 0 1 -4.2 -4.2Z" fill="url(#cb1)"/>
<text x="1230.14" y="784.10" text-anchor="middle" font-size="10" fill="#7f8fab">7</text>
<rect x="1244.27" y="638.00" width="15.9" height="61.90" fill="url(#cb2)"/>
<path d="M1244.27 699.90h15.9V760.80a4.2 4.2 0 0 1 -4.2 4.2H1248.47a4.2 4.2 0 0 1 -4.2 -4.2Z" fill="url(#cg1)"/>
<text x="1252.22" y="784.10" text-anchor="middle" font-size="10" fill="#7f8fab">8</text>
<rect x="1266.36" y="638.00" width="15.9" height="4.70" fill="url(#cb2)"/>
<path d="M1266.36 642.70h15.9V760.80a4.2 4.2 0 0 1 -4.2 4.2H1270.56a4.2 4.2 0 0 1 -4.2 -4.2Z" fill="url(#cg1)"/>
<text x="1274.31" y="784.10" text-anchor="middle" font-size="10" fill="#7f8fab">9</text>
<rect x="1288.44" y="638.00" width="15.9" height="11.80" fill="url(#cb2)"/>
<path d="M1288.44 649.80h15.9V760.80a4.2 4.2 0 0 1 -4.2 4.2H1292.64a4.2 4.2 0 0 1 -4.2 -4.2Z" fill="url(#cg1)"/>
<text x="1296.39" y="784.10" text-anchor="middle" font-size="10" fill="#7f8fab">10</text>
<rect x="1310.52" y="638.00" width="15.9" height="19.80" fill="url(#cb2)"/>
<path d="M1310.52 657.80h15.9V760.80a4.2 4.2 0 0 1 -4.2 4.2H1314.72a4.2 4.2 0 0 1 -4.2 -4.2Z" fill="url(#cg1)"/>
<text x="1318.47" y="784.10" text-anchor="middle" font-size="10" fill="#7f8fab">11</text>
<path d="M1332.61 638.00h15.9V760.80a4.2 4.2 0 0 1 -4.2 4.2H1336.81a4.2 4.2 0 0 1 -4.2 -4.2Z" fill="url(#cb1)"/>
<text x="1340.56" y="784.10" text-anchor="middle" font-size="10" fill="#7f8fab">12</text>
<path d="M1354.69 638.00h15.9V760.80a4.2 4.2 0 0 1 -4.2 4.2H1358.89a4.2 4.2 0 0 1 -4.2 -4.2Z" fill="url(#cb1)"/>
<text x="1362.64" y="784.10" text-anchor="middle" font-size="10" fill="#7f8fab">13</text>
<path d="M1376.77 638.00h15.9V760.80a4.2 4.2 0 0 1 -4.2 4.2H1380.97a4.2 4.2 0 0 1 -4.2 -4.2Z" fill="url(#cb1)"/>
<text x="1384.72" y="784.10" text-anchor="middle" font-size="10" fill="#7f8fab">14</text>
<path d="M1398.86 638.00h15.9V760.80a4.2 4.2 0 0 1 -4.2 4.2H1403.06a4.2 4.2 0 0 1 -4.2 -4.2Z" fill="url(#cb1)"/>
<text x="1406.81" y="784.10" text-anchor="middle" font-size="10" fill="#7f8fab">15</text>
<path d="M1420.94 638.00h15.9V760.80a4.2 4.2 0 0 1 -4.2 4.2H1425.14a4.2 4.2 0 0 1 -4.2 -4.2Z" fill="url(#cb1)"/>
<text x="1428.89" y="784.10" text-anchor="middle" font-size="10" fill="#7f8fab">16</text>
<rect x="1443.02" y="638.00" width="15.9" height="39.10" fill="url(#cb2)"/>
<path d="M1443.02 677.10h15.9V760.80a4.2 4.2 0 0 1 -4.2 4.2H1447.22a4.2 4.2 0 0 1 -4.2 -4.2Z" fill="url(#cg1)"/>
<text x="1450.97" y="784.10" text-anchor="middle" font-size="10" fill="#7f8fab">17</text>
<rect x="1465.11" y="638.00" width="15.9" height="7.10" fill="url(#cb2)"/>
<path d="M1465.11 645.10h15.9V760.80a4.2 4.2 0 0 1 -4.2 4.2H1469.31a4.2 4.2 0 0 1 -4.2 -4.2Z" fill="url(#cg1)"/>
<text x="1473.06" y="784.10" text-anchor="middle" font-size="10" fill="#7f8fab">18</text>
<rect x="1487.19" y="638.00" width="15.9" height="31.70" fill="url(#cb2)"/>
<rect x="1487.19" y="669.70" width="15.9" height="94.30" fill="url(#cg2)"/>
<text x="1495.14" y="784.10" text-anchor="middle" font-size="10" fill="#7f8fab">19</text>
<rect x="1509.27" y="638.00" width="15.9" height="57.90" fill="url(#cb2)"/>
<path d="M1509.27 695.90h15.9V760.80a4.2 4.2 0 0 1 -4.2 4.2H1513.47a4.2 4.2 0 0 1 -4.2 -4.2Z" fill="url(#cg1)"/>
<text x="1517.22" y="784.10" text-anchor="middle" font-size="10" fill="#7f8fab">20</text>
<rect x="1531.36" y="638.00" width="15.9" height="14.20" fill="url(#cb2)"/>
<path d="M1531.36 652.20h15.9V760.80a4.2 4.2 0 0 1 -4.2 4.2H1535.56a4.2 4.2 0 0 1 -4.2 -4.2Z" fill="url(#cg1)"/>
<text x="1539.31" y="784.10" text-anchor="middle" font-size="10" fill="#7f8fab">21</text>
<rect x="1553.44" y="638.00" width="15.9" height="46.90" fill="url(#cb2)"/>
<path d="M1553.44 684.90h15.9V760.80a4.2 4.2 0 0 1 -4.2 4.2H1557.64a4.2 4.2 0 0 1 -4.2 -4.2Z" fill="url(#cg1)"/>
<text x="1561.39" y="784.10" text-anchor="middle" font-size="10" fill="#7f8fab">22</text>
<rect x="1575.52" y="638.00" width="15.9" height="76.00" fill="url(#cb2)"/>
<path d="M1575.52 714.00h15.9V760.80a4.2 4.2 0 0 1 -4.2 4.2H1579.72a4.2 4.2 0 0 1 -4.2 -4.2Z" fill="url(#cg1)"/>
<text x="1583.47" y="784.10" text-anchor="middle" font-size="10" fill="#7f8fab">23</text>
<rect x="1597.61" y="638.00" width="15.9" height="85.80" fill="url(#cb2)"/>
<path d="M1597.61 723.80h15.9V760.80a4.2 4.2 0 0 1 -4.2 4.2H1601.81a4.2 4.2 0 0 1 -4.2 -4.2Z" fill="url(#cg1)"/>
<text x="1605.56" y="784.10" text-anchor="middle" font-size="10" fill="#7f8fab">24</text>
<rect x="1187.5" y="801" width="9.7" height="9.3" fill="#fa3341"/>
<rect x="1275.6" y="801" width="9.7" height="9.3" fill="#0a86ea"/>
<rect x="1348.5" y="801" width="9.7" height="9.3" fill="#969696"/>
<rect x="1419.2" y="801" width="9.7" height="9.3" fill="#020202"/>
</svg>
<span class="t" id="t61" style="left:1202px;top:802px;font-size:9.5px;font-weight:400;color:#fff;-webkit-text-stroke:0.12px #fff;transform:translateX(0.55px) scaleX(1.2298)">Нет данных</span>
<span class="t" id="t62" style="left:1290px;top:802px;font-size:9.5px;font-weight:400;color:#fff;-webkit-text-stroke:0.12px #fff;transform:translateX(0.67px) scaleX(1.2185)">В работе</span>
<span class="t" id="t63" style="left:1362px;top:802px;font-size:9.5px;font-weight:400;color:#fff;-webkit-text-stroke:0.12px #fff;transform:translateX(0.69px) scaleX(1.2786)">Простой</span>
<span class="t" id="t64" style="left:1434px;top:802px;font-size:9.5px;font-weight:400;color:#fff;-webkit-text-stroke:0.12px #fff;transform:translateX(0.35px) scaleX(1.2702)">Выключен</span>
</body></html>
